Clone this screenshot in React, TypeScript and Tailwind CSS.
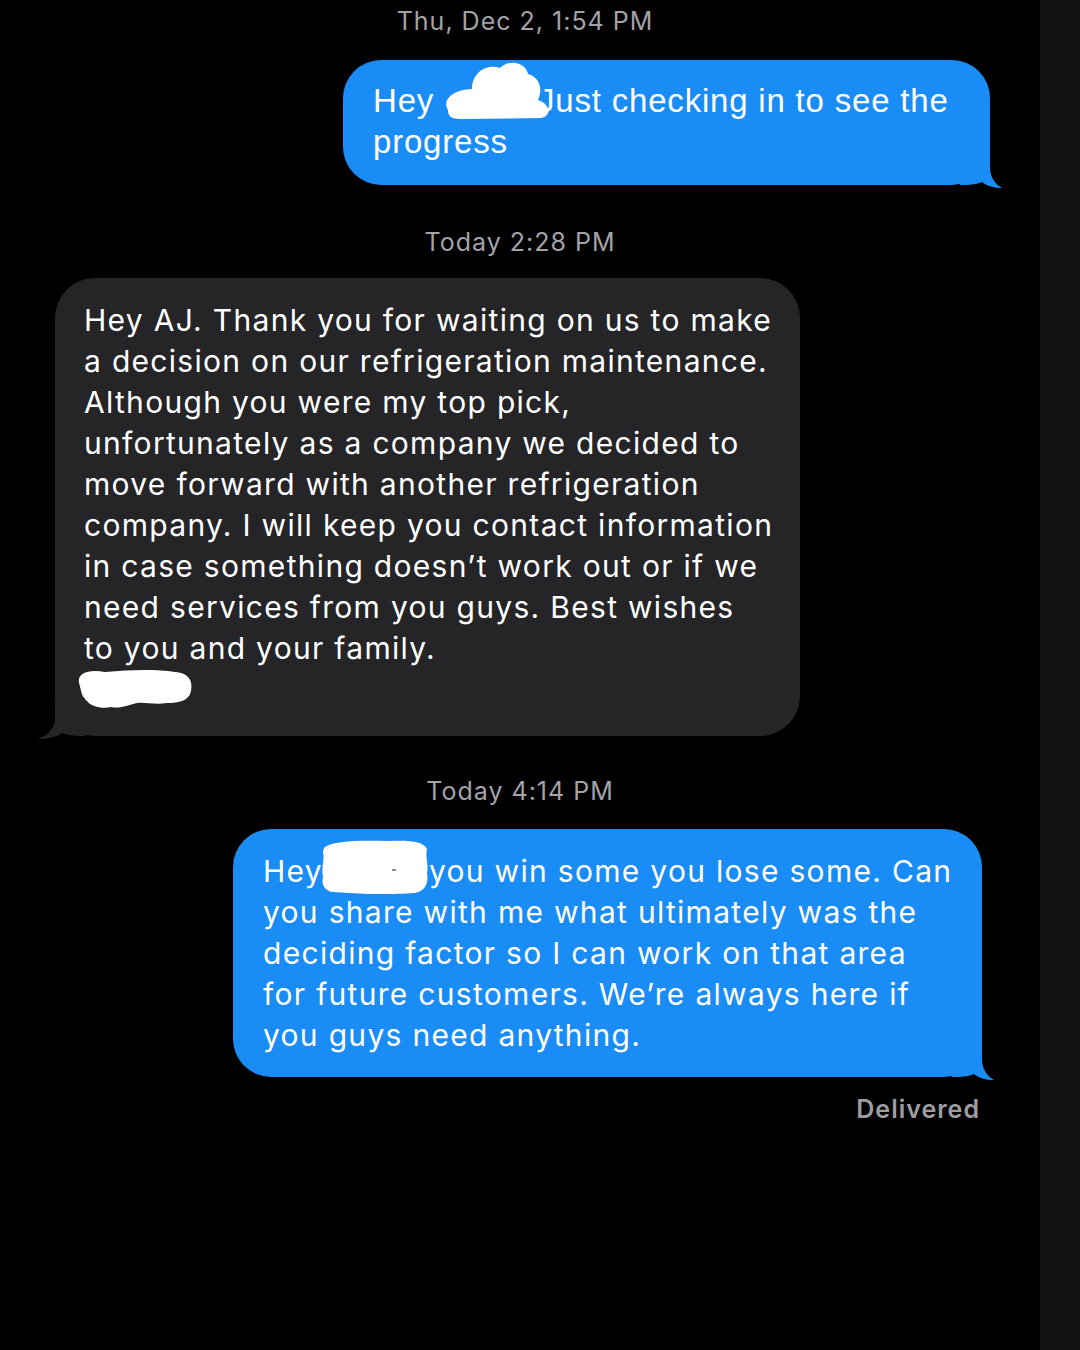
import React from "react";

const grayLines = [
  "Hey AJ. Thank you for waiting on us to make",
  "a decision on our refrigeration maintenance.",
  "Although you were my top pick,",
  "unfortunately as a company we decided to",
  "move forward with another refrigeration",
  "company. I will keep you contact information",
  "in case something doesn\u2019t work out or if we",
  "need services from you guys. Best wishes",
  "to you and your family.",
];

const blueLines = [
  "you share with me what ultimately was the",
  "deciding factor so I can work on that area",
  "for future customers. We\u2019re always here if",
  "you guys need anything.",
];

function TailRight({ color }: { color: string }) {
  return (
    <svg className="absolute right-[-12px] bottom-[-3px]" width="42" height="41" viewBox="0 0 42 41">
      <path d="M0 0 L30 0 L30 20 C30 30 35 37 42 41 C34 41 27 39 22 35 C18 37 12 38 4 38 L0 38 Z" fill={color} />
    </svg>
  );
}

function TailLeft({ color }: { color: string }) {
  return (
    <svg className="absolute left-[-17px] bottom-[-3px]" width="47" height="41" viewBox="0 0 47 41">
      <path d="M47 0 L17 0 L17 20 C17 30 10 37 0 41 C10 41 18 39 24 35 C29 37 35 38 43 38 L47 38 Z" fill={color} />
    </svg>
  );
}

export default function App() {
  return (
    <div className="flex min-h-[1350px] w-[1080px] bg-black" style={{ fontFamily: "Inter, 'Liberation Sans', sans-serif" }}>
      <div className="flex w-[1040px] flex-col">
        <div className="mt-[5px] pl-[10px] text-center text-[25px] leading-[32px] tracking-[1px] text-[#a3a3a7]">Thu, Dec 2, 1:54 PM</div>

        {/* first sent bubble */}
        <div className="relative ml-[343px] mt-[23px] w-[647px] rounded-[38px] bg-[#1a8cf6] pb-[23px] pl-[30px] pt-[20px] text-[33px] leading-[41px] tracking-[0.8px] text-white" style={{ fontFamily: "'Liberation Sans', Arial, sans-serif" }}>
          <div className="whitespace-nowrap">
            Hey{" "}
            <span className="relative inline-block h-[41px] w-[94px] align-top">
              <svg className="absolute left-[-2px] top-[-20px]" width="110" height="60" viewBox="0 0 110 60">
                <path d="M6 50 C0 40 10 30 30 29 C30 13 44 3 58 8 C66 -1 84 2 86 14 C98 17 101 30 96 40 C108 44 110 55 100 58 L18 59 C8 59 6 55 6 50 Z" fill="#fff" />
              </svg>
            </span>
            Just checking in to see the
          </div>
          <div className="whitespace-nowrap">progress</div>
          <TailRight color="#1a8cf6" />
        </div>

        <div className="mt-[41px] text-center text-[25px] leading-[32px] tracking-[1px] text-[#a3a3a7]">Today 2:28 PM</div>

        {/* received bubble */}
        <div className="relative ml-[55px] mt-[20px] w-[745px] rounded-[40px] bg-[#252528] pb-[26px] pl-[29px] pt-[22px] text-[30px] leading-[41px] tracking-[1.3px] text-white">
          {grayLines.map((l) => (
            <div key={l} className="whitespace-nowrap">
              {l}
            </div>
          ))}
          <div className="h-[41px]">
            <svg className="-ml-[9px]" width="118" height="40" viewBox="0 0 118 40">
              <path d="M4 14 C2 4 14 0 30 3 C55 1 80 0 100 3 C114 4 118 12 116 22 C114 32 104 34 92 34 C80 36 70 33 62 34 C52 36 46 40 36 38 C28 40 16 38 12 32 C6 28 6 20 4 14 Z" fill="#fff" />
            </svg>
          </div>
          <TailLeft color="#252528" />
        </div>

        <div className="mt-[39px] text-center text-[25px] leading-[32px] tracking-[1px] text-[#a3a3a7]">Today 4:14 PM</div>

        {/* second sent bubble */}
        <div className="relative ml-[233px] mt-[22px] w-[749px] rounded-[38px] bg-[#1a8cf6] pb-[21px] pl-[30px] pt-[22px] text-[30px] leading-[41px] tracking-[1.3px] text-white">
          <div className="whitespace-nowrap">
            Hey
            <span className="relative inline-block h-[41px] w-[106px] align-top">
              <svg className="absolute left-[-4px] top-[-12px]" width="112" height="56" viewBox="0 0 112 56">
                <path d="M6 8 C14 2 40 1 70 2 C90 1 104 2 108 10 C106 18 110 26 108 34 C110 44 106 52 96 54 C70 56 40 55 14 53 C6 52 2 46 4 38 C2 28 6 20 4 14 C4 11 5 9 6 8 Z" fill="#fff" />
                <rect x="73" y="30" width="4" height="2" fill="#8a8a8a" />
              </svg>
            </span>
            you win some you lose some. Can
          </div>
          {blueLines.map((l) => (
            <div key={l} className="whitespace-nowrap">
              {l}
            </div>
          ))}
          <TailRight color="#1a8cf6" />
        </div>

        <div className="mr-[60px] mt-[17px] self-end text-[25px] font-semibold leading-[30px] tracking-[1px] text-[#9d9d9f]">Delivered</div>
      </div>
      <div className="w-[40px] bg-[#111111]" />
    </div>
  );
}
